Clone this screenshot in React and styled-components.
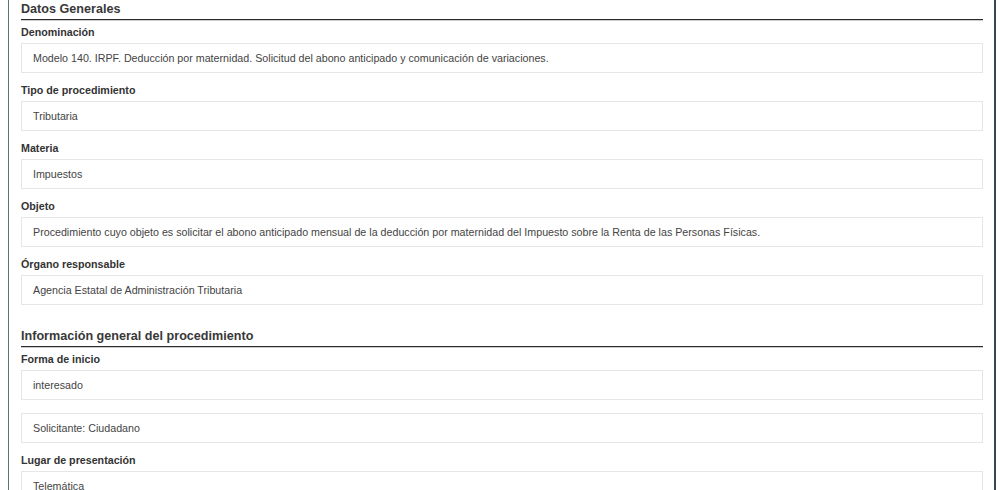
import React from 'react'
import styled, { createGlobalStyle } from 'styled-components'

const GlobalStyle = createGlobalStyle`
    html, body {
        margin: 0;
        padding: 0;
        background: #ffffff;
        font-family: "Liberation Sans", Arial, sans-serif;
    }
`

const Page = styled.div`
    margin-left: 8px;
    width: 988px;
    height: 490px;
    overflow: hidden;
    box-sizing: border-box;
    border-left: 1px solid #5f6f75;
    border-right: 2px solid #2f4a55;
    padding: 0 11px 0 12px;
    background: #ffffff;
`

const Section = styled.section`
    margin-top: ${props => props.first ? '0' : '22px'};
`

const SectionTitle = styled.h2`
    margin: 0 0 4px 0;
    font-size: 12.6px;
    line-height: 18px;
    font-weight: bold;
    color: #383838;
    border-bottom: 1px solid #2b2b2b;
    box-shadow: 0 1px 0 #c9cdcf;
    padding-bottom: 1px;
`

const Label = styled.div`
    font-size: 10.7px;
    line-height: 16px;
    font-weight: bold;
    color: #333333;
    margin-bottom: 3px;
`

const Field = styled.div`
    margin-bottom: ${props => props.gap || '9px'};
`

const ValueBox = styled.div`
    box-sizing: border-box;
    height: 30px;
    border: 1px solid #e6e6e6;
    padding: 0 11px;
    font-size: 10.7px;
    line-height: 29px;
    color: #444444;
    white-space: nowrap;
    overflow: hidden;
`

const generales = [
    { label: 'Denominación', value: 'Modelo 140. IRPF. Deducción por maternidad. Solicitud del abono anticipado y comunicación de variaciones.' },
    { label: 'Tipo de procedimiento', value: 'Tributaria' },
    { label: 'Materia', value: 'Impuestos' },
    { label: 'Objeto', value: 'Procedimiento cuyo objeto es solicitar el abono anticipado mensual de la deducción por maternidad del Impuesto sobre la Renta de las Personas Físicas.' },
    { label: 'Órgano responsable', value: 'Agencia Estatal de Administración Tributaria' },
]

const App = () => (
    <>
        <GlobalStyle />
        <Page>
            <Section first>
                <SectionTitle>Datos Generales</SectionTitle>
                {generales.map(item => (
                    <Field key={item.label}>
                        <Label>{item.label}</Label>
                        <ValueBox>{item.value}</ValueBox>
                    </Field>
                ))}
            </Section>
            <Section>
                <SectionTitle>Información general del procedimiento</SectionTitle>
                <Field gap="13px">
                    <Label>Forma de inicio</Label>
                    <ValueBox>interesado</ValueBox>
                </Field>
                <Field>
                    <ValueBox>Solicitante: Ciudadano</ValueBox>
                </Field>
                <Field>
                    <Label>Lugar de presentación</Label>
                    <ValueBox>Telemática</ValueBox>
                </Field>
            </Section>
        </Page>
    </>
)

export default App
